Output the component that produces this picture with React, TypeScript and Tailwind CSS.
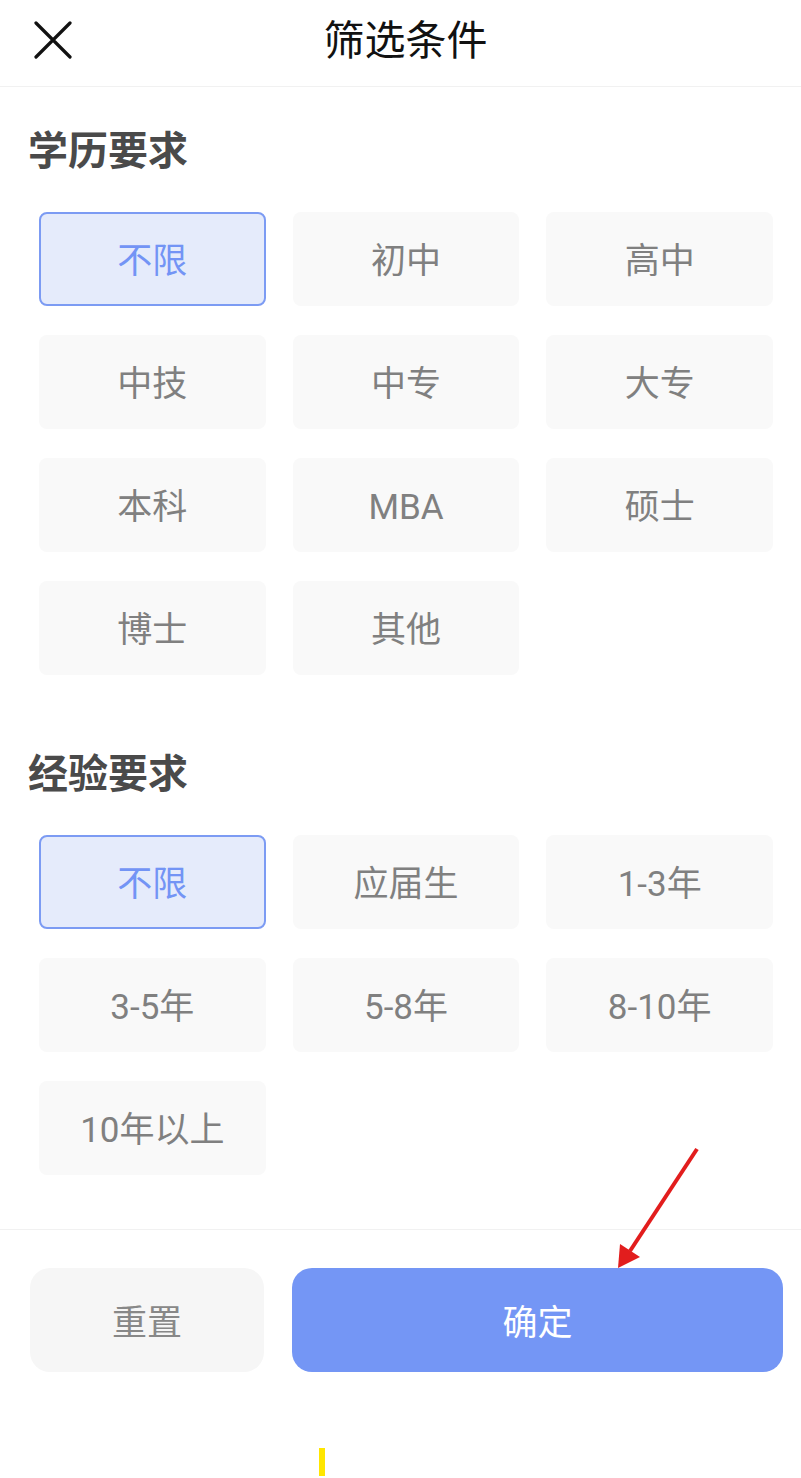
import React, { useState } from 'react'

const edu = ['不限', '初中', '高中', '中技', '中专', '大专', '本科', 'MBA', '硕士', '博士', '其他']
const exp = ['不限', '应届生', '1-3年', '3-5年', '5-8年', '8-10年', '10年以上']

type GroupProps = {
  title: string,
  items: string[],
  selected: number,
  onSelect: (i: number) => void,
}

function OptionGroup({ title, items, selected, onSelect }: GroupProps) {
  return (
    <div className="flex flex-col">
      <h2 className="pl-[28px] text-[40px] leading-[40px] font-bold text-[#4a4a4a]">{title}</h2>
      <div className="mt-[40px] pl-[39px] pr-[28px] grid grid-cols-3 gap-x-[27px] gap-y-[29px]">
        {items.map((item, i) => (
          <button
            key={item}
            onClick={() => onSelect(i)}
            className={
              i === selected
                ? 'h-[94px] pt-[6px] rounded-[8px] border-2 border-[#7c9bf3] bg-[#e5ebfb] text-[#7394f5] text-[35px] flex items-center justify-center'
                : 'h-[94px] pt-[6px] rounded-[8px] border-2 border-transparent bg-[#f9f9f9] text-[#808080] text-[35px] flex items-center justify-center'
            }
          >
            {item}
          </button>
        ))}
      </div>
    </div>
  )
}

export default function App() {
  const [eduSel, setEduSel] = useState(0)
  const [expSel, setExpSel] = useState(0)

  return (
    <div
      className="relative w-[801px] h-[1478px] bg-white overflow-hidden"
      style={{ fontFamily: 'Roboto, "Noto Sans CJK SC", sans-serif' }}
    >
      {/* header */}
      <div className="relative h-[87px] border-b border-[#f1f1f1] flex items-center justify-center">
        <button className="absolute left-[34px] top-[21px] w-[38px] h-[38px] flex items-center justify-center">
          <svg width="38" height="38" viewBox="0 0 38 38">
            <path d="M2 2 L36 36 M36 2 L2 36" stroke="#111" strokeWidth="3.2" strokeLinecap="round" />
          </svg>
        </button>
        <h1 className="text-[41px] leading-[41px] text-[#111] ml-[10px] -mt-[4px]">筛选条件</h1>
      </div>

      <div className="pt-[45px]">
        <OptionGroup title="学历要求" items={edu} selected={eduSel} onSelect={setEduSel} />
        <div className="mt-[80px]">
          <OptionGroup title="经验要求" items={exp} selected={expSel} onSelect={setExpSel} />
        </div>
      </div>

      {/* footer */}
      <div className="mt-[54px] border-t border-[#f1f1f1] pt-[38px] pl-[30px] pr-[18px] flex gap-[28px]">
        <button
          onClick={() => { setEduSel(0); setExpSel(0) }}
          className="w-[234px] h-[104px] pt-[8px] rounded-[20px] bg-[#f6f6f6] text-[#888] text-[35px] flex items-center justify-center"
        >
          重置
        </button>
        <button className="flex-1 h-[104px] pt-[8px] rounded-[20px] bg-[#7496f5] text-white text-[35px] flex items-center justify-center">
          确定
        </button>
      </div>

      {/* annotation arrow */}
      <svg className="absolute left-0 top-0 pointer-events-none" width="801" height="1478">
        <line x1="697" y1="1149" x2="630" y2="1251" stroke="#e21d1d" strokeWidth="4" />
        <polygon points="618,1268 620,1244 640,1257" fill="#e21d1d" />
      </svg>
      <div className="absolute left-[319px] top-[1448px] w-[6px] h-[28px] bg-[#ffe600]" />
    </div>
  )
}
